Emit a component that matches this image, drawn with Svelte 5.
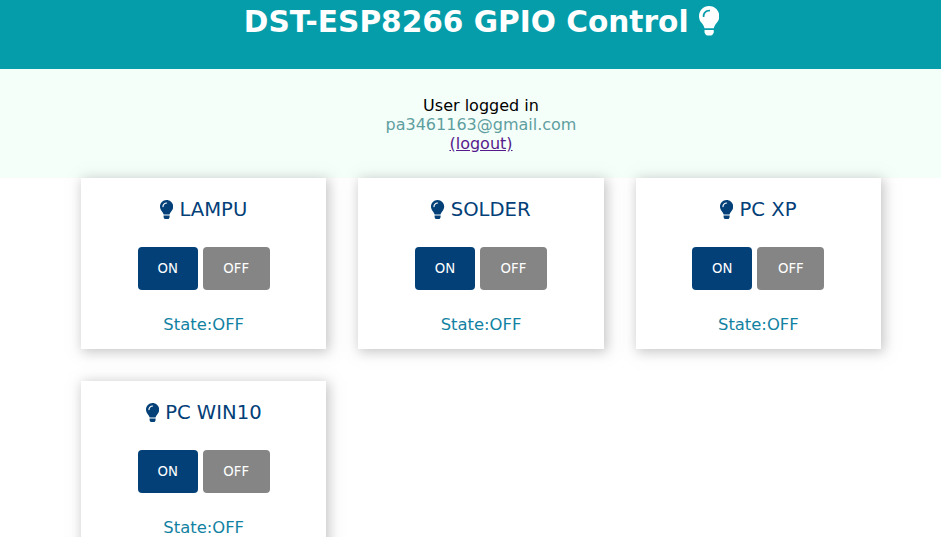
<script>
  const devices = ['LAMPU', 'SOLDER', 'PC XP', 'PC WIN10'];
  const bulb = 'M96.06 454.35c.01 6.29 1.87 12.45 5.36 17.69l17.09 25.69a31.99 31.99 0 0 0 26.64 14.28h61.71a31.99 31.99 0 0 0 26.64-14.28l17.09-25.69a31.989 31.989 0 0 0 5.36-17.69l.04-38.35H96.01l.05 38.35zM0 176c0 44.37 16.45 84.85 43.56 115.78 16.52 18.85 42.36 58.23 52.21 91.45.04.26.11.52.15.78h160.16c.04-.26.11-.51.15-.78 9.85-33.22 35.69-72.6 52.21-91.45C335.55 260.85 352 220.37 352 176 352 78.61 272.91-.3 175.45 0 73.44.31 0 82.97 0 176zm176-80c-44.11 0-80 35.89-80 80 0 8.84-7.16 16-16 16s-16-7.16-16-16c0-61.76 50.24-112 112-112 8.84 0 16 7.16 16 16s-7.16 16-16 16z';
</script>

<header class="top">
  <h1>
    DST-ESP8266 GPIO Control
    <svg class="bulb big" viewBox="0 0 352 512" aria-hidden="true"><path d={bulb} /></svg>
  </h1>
</header>

<section class="login">
  <p>User logged in</p>
  <p class="email">pa3461163@gmail.com</p>
  <a href="#logout">(logout)</a>
</section>

<main class="cards">
  {#each devices as name}
    <div class="card">
      <h2>
        <svg class="bulb" viewBox="0 0 352 512" aria-hidden="true"><path d={bulb} /></svg>
        {name}
      </h2>
      <div class="buttons">
        <button class="on">ON</button>
        <button class="off">OFF</button>
      </div>
      <p class="state">State:OFF</p>
    </div>
  {/each}
</main>

<style>
  :global(body) {
    overflow: hidden;
    font-family: "DejaVu Sans", Verdana, sans-serif;
    background: #fff;
  }

  .top {
    height: 69px;
    padding-left: 22px;
    background: #059daa;
    color: #fff;
    text-align: center;
  }

  h1 {
    margin: 0;
    padding-top: 3px;
    font-size: 29.6px;
    line-height: 39px;
    font-weight: 700;
  }

  .bulb {
    fill: currentColor;
    width: 13.2px;
    height: 19.2px;
    vertical-align: -3px;
  }

  .bulb.big {
    width: 20.3px;
    height: 29.6px;
    vertical-align: -4px;
  }

  .login {
    height: 109px;
    box-sizing: border-box;
    padding: 27px 0 0 21px;
    background: #f5fffa;
    text-align: center;
    font-size: 16px;
    line-height: 19px;
  }

  .login p {
    margin: 0;
    color: #000;
  }

  .login .email {
    color: #5f9ea0;
  }

  .login a {
    color: #551a8b;
  }

  .cards {
    display: grid;
    grid-template-columns: repeat(3, 1fr);
    gap: 32px;
    width: 800px;
    margin-left: 81px;
  }

  .card {
    height: 171px;
    box-sizing: border-box;
    padding-top: 20px;
    background: #fff;
    text-align: center;
    box-shadow: 2px 2px 12px 1px rgba(140, 140, 140, 0.5);
  }

  h2 {
    margin: 0;
    font-size: 19.6px;
    line-height: 24px;
    font-weight: 400;
    color: #034078;
  }

  .buttons {
    display: flex;
    justify-content: center;
    gap: 5px;
    margin-top: 25px;
  }

  button {
    height: 43px;
    border: 0;
    border-radius: 4px;
    padding: 0;
    color: #fff;
    font: inherit;
    font-size: 13.3px;
  }

  .on {
    width: 60px;
    background: #034078;
  }

  .off {
    width: 67px;
    background: #858585;
  }

  .state {
    margin: 25px 0 0;
    font-size: 16.4px;
    line-height: 20px;
    color: #1282a2;
  }
</style>
